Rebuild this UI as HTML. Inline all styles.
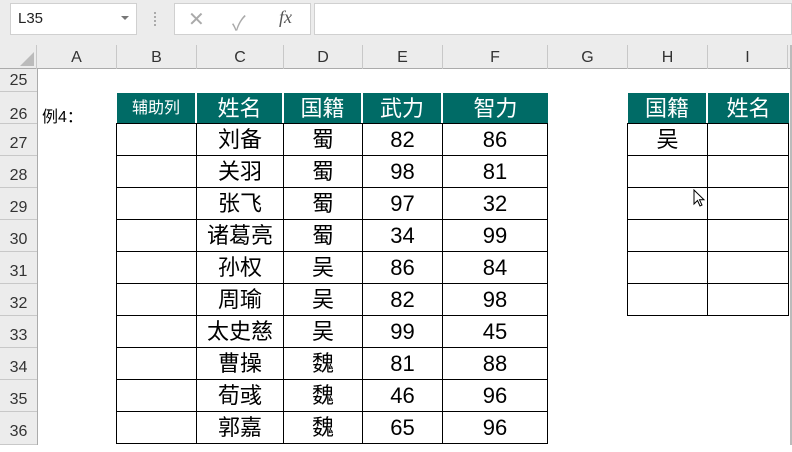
<!DOCTYPE html>
<html><head><meta charset="utf-8"><style>
*{margin:0;padding:0;box-sizing:border-box}
body{width:792px;height:445px;overflow:hidden;background:#fff;position:relative;font-family:"Liberation Sans","Noto Sans CJK SC",sans-serif}
.a{position:absolute}
.ch{position:absolute;top:45px;height:24px;border-right:1px solid #c8c8c8;text-align:center;font-size:16px;line-height:25px;color:#333}
.rh{position:absolute;left:0;width:37px;border-bottom:1px solid #c8c8c8;font-size:16px;color:#333;text-align:center;background:#ececec}
.c{position:absolute;border:1px solid #000;text-align:center;font-size:22px;line-height:32px;color:#000;margin-left:-1px;margin-top:-1px;width:0}
.h{position:absolute;background:#006b66;color:#fff;text-align:center;font-size:22px;line-height:31px;border-right:2px solid #fff}
</style></head><body>
<div class="a" style="left:0;top:0;width:792px;height:45px;background:#ececec"></div>
<div class="a" style="left:10px;top:3px;width:127px;height:32px;background:#fff;border:1px solid #d0d0d0;font-size:15px;line-height:30px;padding-left:7px;color:#222">L35</div>
<div class="a" style="left:121px;top:16px;width:0;height:0;border-left:4px solid transparent;border-right:4px solid transparent;border-top:4px solid #777"></div>
<div class="a" style="left:154px;top:12px;width:2px;height:14px;border-left:2px dotted #aaa"></div>
<div class="a" style="left:174px;top:3px;width:137px;height:32px;background:#fff;border:1px solid #d0d0d0"></div>
<div class="a" style="left:188px;top:7px;font-size:20px;color:#aaa">✕</div>
<div class="a" style="left:232px;top:7px;font-size:20px;color:#aaa">✓</div>
<div class="a" style="left:279px;top:7px;font-size:18px;color:#555;font-family:'Liberation Serif',serif;font-style:italic">fx</div>
<div class="a" style="left:314px;top:3px;width:478px;height:32px;background:#fff;border:1px solid #d0d0d0"></div>
<div class="a" style="left:0;top:45px;width:792px;height:24px;background:#ececec;border-bottom:1px solid #ababab"></div>
<div class="a" style="left:20px;top:52px;width:0;height:0;border-left:14px solid transparent;border-bottom:14px solid #bbb"></div>
<div class="ch" style="left:0;width:37px"></div>
<div class="ch" style="left:37px;width:80px">A</div>
<div class="ch" style="left:117px;width:80px">B</div>
<div class="ch" style="left:197px;width:87px">C</div>
<div class="ch" style="left:284px;width:79px">D</div>
<div class="ch" style="left:363px;width:80px">E</div>
<div class="ch" style="left:443px;width:105px">F</div>
<div class="ch" style="left:548px;width:80px">G</div>
<div class="ch" style="left:628px;width:80px">H</div>
<div class="ch" style="left:708px;width:80px">I</div>
<div class="a" style="left:790px;top:45px;width:2px;height:400px;background:#bbb"></div>
<div class="a" style="left:37px;top:69px;width:1px;height:376px;background:#ababab"></div>
<div class="rh" style="top:69px;height:23px;line-height:24px">25</div>
<div class="rh" style="top:92px;height:32px;line-height:46px">26</div>
<div class="rh" style="top:124px;height:32px;line-height:40px">27</div>
<div class="rh" style="top:156px;height:32px;line-height:40px">28</div>
<div class="rh" style="top:188px;height:32px;line-height:40px">29</div>
<div class="rh" style="top:220px;height:32px;line-height:40px">30</div>
<div class="rh" style="top:252px;height:32px;line-height:40px">31</div>
<div class="rh" style="top:284px;height:32px;line-height:40px">32</div>
<div class="rh" style="top:316px;height:32px;line-height:40px">33</div>
<div class="rh" style="top:348px;height:32px;line-height:40px">34</div>
<div class="rh" style="top:380px;height:32px;line-height:40px">35</div>
<div class="rh" style="top:412px;height:33px;line-height:40px">36</div>
<div class="a" style="left:42px;top:103px;font-size:16px">例4：</div>
<div id="t"></div>
<script>
var t=document.getElementById('t'),h='';
var cols=[[117,197],[197,284],[284,363],[363,443],[443,548]];
var hd=['辅助列','姓名','国籍','武力','智力'];
cols.forEach(function(c,i){h+='<div class="h" style="left:'+c[0]+'px;top:93px;width:'+(c[1]-c[0])+'px;height:31px;'+(i==0?'font-size:16px;':'')+(i==4?'border-right:none;':'')+'">'+hd[i]+'</div>';});
var d=[['刘备','蜀',82,86],['关羽','蜀',98,81],['张飞','蜀',97,32],['诸葛亮','蜀',34,99],['孙权','吴',86,84],['周瑜','吴',82,98],['太史慈','吴',99,45],['曹操','魏',81,88],['荀彧','魏',46,96],['郭嘉','魏',65,96]];
d.forEach(function(r,j){var y=124+32*j;var v=[''].concat(r);
cols.forEach(function(c,i){h+='<div class="c" style="left:'+c[0]+'px;top:'+y+'px;width:'+(c[1]-c[0]+1)+'px;height:33px">'+v[i]+'</div>';});});
var c2=[[628,708],[708,789]];
h+='<div class="h" style="left:628px;top:93px;width:80px;height:31px">国籍</div><div class="h" style="left:708px;top:93px;width:81px;height:31px;border-right:none">姓名</div>';
for(var j=0;j<6;j++){var y=124+32*j;c2.forEach(function(c,i){h+='<div class="c" style="left:'+c[0]+'px;top:'+y+'px;width:'+(c[1]-c[0]+1)+'px;height:33px">'+(j==0&&i==0?'吴':'')+'</div>';});}
t.innerHTML=h;
</script>
<svg class="a" style="left:693px;top:189px" width="14" height="20" viewBox="0 0 14 20"><path d="M1 1 L1 15 L4.5 11.5 L7 17 L9 16 L6.5 10.8 L11 10.8 Z" fill="#fff" stroke="#000" stroke-width="1"/></svg>
</body></html>
